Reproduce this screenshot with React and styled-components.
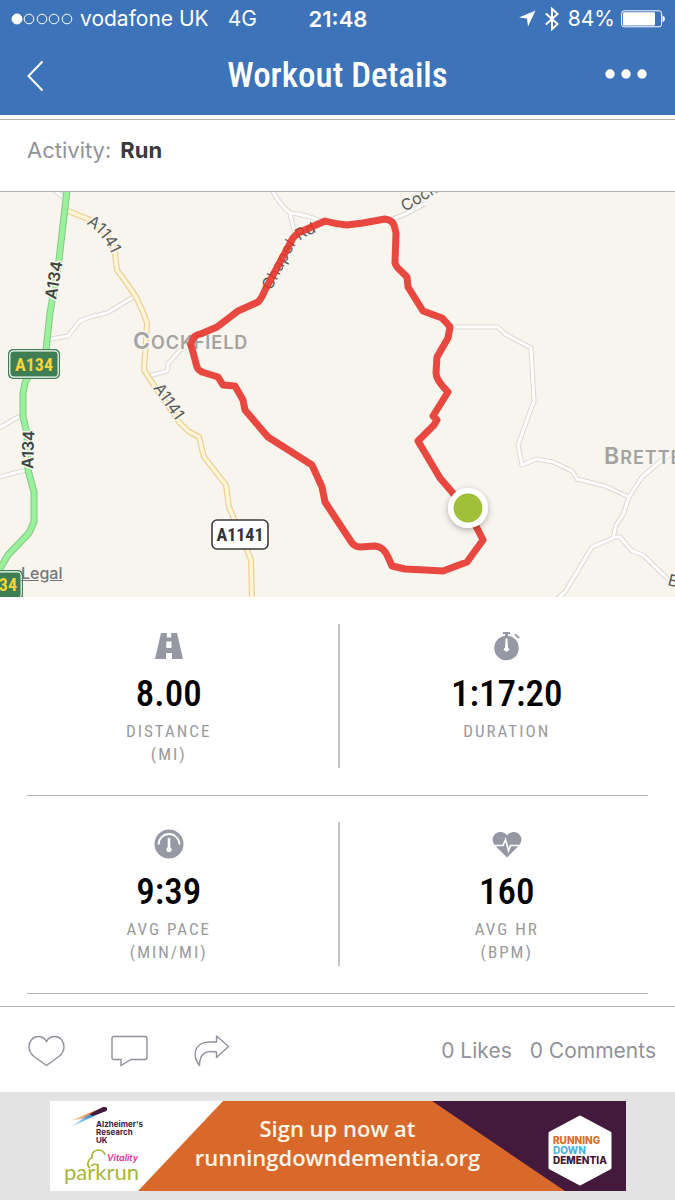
import styled, { createGlobalStyle } from "styled-components";

const sans = `Inter, "Liberation Sans", sans-serif`;
const narrow = `"Roboto Condensed", "Liberation Sans Narrow", "Liberation Sans", sans-serif`;

const GlobalStyle = createGlobalStyle`
  * {
    box-sizing: border-box;
  }
  body {
    margin: 0;
    background: #fff;
    font-family: ${sans};
  }
  svg {
    display: block;
  }
`;

const Page = styled.div`
  display: flex;
  flex-direction: column;
  min-height: 100vh;
`;

const Header = styled.header`
  padding-bottom: 1px;
  background: #3d73b9;
  color: #fff;
`;

const StatusBar = styled.div`
  display: grid;
  grid-template-columns: 1fr auto 1fr;
  align-items: center;
  height: 37px;
  padding: 0 10px 0 11px;
  font-size: 21px;
`;

const StatusGroup = styled.div`
  display: flex;
  align-items: center;
  justify-content: ${({ $end }) => ($end ? "flex-end" : "flex-start")};
  gap: ${({ $gap }) => $gap}px;
`;

const Time = styled.span`
  font-size: 22px;
  font-weight: 600;
`;

const NavBar = styled.nav`
  display: grid;
  grid-template-columns: 98px 1fr 98px;
  align-items: center;
  height: 77px;
`;

const NavButton = styled.button`
  display: flex;
  align-items: center;
  justify-content: ${({ $end }) => ($end ? "flex-end" : "flex-start")};
  height: 64px;
  padding: 0 27px;
  border: 0;
  background: none;
  color: inherit;
  cursor: pointer;
`;

const Title = styled.h1`
  margin: 0;
  font: 500 35px/40px ${narrow};
  text-align: center;
`;

const Activity = styled.div`
  display: flex;
  gap: 9px;
  margin-top: 4px;
  padding: 15px 27px 26px;
  border-top: 1px solid #b4b4b8;
  border-bottom: 1px solid #b4b4b8;
  color: #92929a;
  font-size: 22px;
  line-height: 30px;

  strong {
    color: #3a3a3c;
    font-weight: 700;
  }
`;

const MapArea = styled.section`
  position: relative;

  svg {
    width: 100%;
    height: 405px;
  }
`;

const Legal = styled.a`
  position: absolute;
  left: 21px;
  bottom: 14px;
  color: #77777a;
  font-size: 16px;
  font-weight: 500;
  line-height: 20px;
`;

const Stats = styled.main`
  padding: 1px 0 12px;
`;

const StatRow = styled.div`
  display: grid;
  grid-template-columns: 1fr 1fr;
  margin: 0 27px;
  padding: 26px 0 27px;
  border-bottom: 1px solid #b4b4b8;
`;

const StatCell = styled.div`
  display: flex;
  flex-direction: column;
  align-items: center;
  min-height: 144px;
  padding: ${({ $first }) => ($first ? "0 27px 0 0" : "0 0 0 26px")};

  & + & {
    border-left: 2px solid #c4c4c6;
  }
`;

const StatIcon = styled.div`
  display: flex;
  align-items: center;
  height: 44px;
  color: #9698a4;
`;

const StatValue = styled.div`
  color: #000;
  font: 500 37px/52px ${narrow};
`;

const StatLabel = styled.div`
  color: #9a9a9c;
  font: 400 17px/23px ${narrow};
  letter-spacing: 2px;
  text-align: center;
  white-space: pre-line;
`;

const Social = styled.div`
  display: flex;
  align-items: center;
  justify-content: space-between;
  height: 86px;
  padding: 2px 19px 0 28px;
  border-top: 1px solid #b4b4b8;
`;

const Actions = styled.div`
  display: flex;
  gap: 45px;
`;

const ActionButton = styled.button`
  padding: 0;
  border: 0;
  background: none;
  color: #8f919c;
  cursor: pointer;
`;

const Counts = styled.div`
  display: flex;
  gap: 18px;
  color: #92929a;
  font-size: 21px;
`;

const AdArea = styled.aside`
  flex: 1;
  padding: 9px 16px;
  background: #e3e3e3;
`;

const Banner = styled.a`
  position: relative;
  display: grid;
  grid-template-columns: 110px 1fr 110px;
  align-items: center;
  width: 100%;
  max-width: 576px;
  height: 90px;
  margin: 0 auto;
  overflow: hidden;
  background: #fff;
  text-decoration: none;
`;

const BannerBackdrop = styled.svg`
  position: absolute;
  inset: 0;
  width: 100%;
  height: 100%;
`;

const BannerText = styled.p`
  position: relative;
  margin: 0;
  padding-bottom: 6px;
  color: #fff5ea;
  font: 600 22px/29px "Open Sans", "Noto Sans", sans-serif;
  text-align: center;
  white-space: nowrap;
`;

const BannerLogo = styled.svg`
  position: relative;
`;

const SignalDots = () => (
  <svg width="62" height="12" viewBox="0 0 62 12" fill="none" stroke="#fff">
    <circle cx="6" cy="6" r="5" fill="#fff" />
    {[18, 31, 43, 56].map((x) => (
      <circle key={x} cx={x} cy="6" r="4.8" strokeWidth="1" />
    ))}
  </svg>
);

const LocationArrow = () => (
  <svg width="17" height="17" viewBox="0 0 17 17" fill="#fff">
    <path d="M16.5.5 0 7.500l8 1L9 16.500z" />
  </svg>
);

const Bluetooth = () => (
  <svg width="14" height="24" viewBox="0 0 14 24" fill="none" stroke="#fff" strokeWidth="2">
    <path d="M.8 6.5 12.6 17 7 22.2V1.8L12.6 7 .8 17.5" />
  </svg>
);

const Battery = () => (
  <svg width="44" height="18" viewBox="0 0 44 18">
    <rect x=".6" y=".8" width="40" height="16" rx="2.6" fill="none" stroke="#fff" />
    <rect x="2" y="2.2" width="32" height="13.2" rx="1" fill="#fff" />
    <path d="M41.500 5.5q2.500 1 2.500 3.3T41.500 12.3z" fill="#fff" />
  </svg>
);

const route =
  "M191 155Q192 147 197 145L203 143 217 137 238 121 258 112Q262 108 265 100L293 48 298 43 325 31Q335 34 347 35L363 33 385 29Q392 30 394 35L396 43 395 73Q396 77 401 81L407 87 408 97 423 121 442 128Q446 132 450 137L448 148 437 167 436 183Q436 190 448 202L433 226 437 230 434 235 418 251 440 288 452 302 477 338 483 350 467 372 443 381 425 380 405 379 392 376 388 367Q384 357 375 356L360 357Q355 357 352 353L325 312 322 297 312 275 268 247 245 220 243 210 235 196 223 195 218 187 202 182Q198 180 197 177Z";

const a134 =
  "M67 0 59 70 50 123 46 160 31 180 25 193 23 203V227L27 243 28 280 34 302V332L29 343 8 365-2 382";

const a1141 =
  "M68 21 88 29Q108 40 115 63L117 80 128 95 136 107 143 122 147 133 144 180 155 197 180 233 188 241 199 247 204 267 226 295 229 317 247 360 251 370 252 408";

const lanes = [
  "M51 149 68 146 80 131 90 127 107 123 135 106",
  "M148 186 167 181 168 174 180 160 191 154",
  "M-1 238 18 227 23 227",
  "M-1 287 26 280",
  "M54 0 63 7",
  "M272 0Q280 15 290 23L295 45",
  "M290 23Q305 24 323 32",
  "M383 31Q400 28 413 20L425 14",
  "M452 137H498L505 144 531 158 534 211 518 255 522 275 536 269 553 272 572 281 577 289 605 296 629 307",
  "M676 260 662 270 642 287 629 307 623 325 616 335 613 348 592 357 565 402 557 409",
  "M613 347 620 347 632 361 643 365 676 397",
];

const RouteMap = () => (
  <svg viewBox="0 2 675 405" preserveAspectRatio="xMidYMid slice" role="img" aria-label="Route map">
    <defs>
      <path id="north" d="M86 34Q105 44 115 73" />
      <path id="chapel" d="M271 101 294 57Q299 48 322 40" />
      <filter id="shade" x="-50%" y="-50%" width="200%" height="200%">
        <feDropShadow dx="0" dy="2" stdDeviation="3" floodOpacity=".3" />
      </filter>
    </defs>
    <rect width="675" height="410" fill="#f8f5ee" />
    <g fill="none" strokeLinejoin="round">
      {lanes.map((d) => (
        <path key={d} d={d} stroke="#dbd8d2" strokeWidth="5" />
      ))}
      {lanes.map((d) => (
        <path key={d} d={d} stroke="#fff" strokeWidth="3" />
      ))}
      <path d={a1141} stroke="#edcf91" strokeWidth="6" />
      <path d={a1141} stroke="#fff6d8" strokeWidth="3.6" />
      <path d={a134} stroke="#82c985" strokeWidth="7" />
      <path d={a134} stroke="#9bf09b" strokeWidth="5" />
    </g>
    <g
      fontFamily={sans}
      fontSize="16"
      fill="#5a5a58"
      stroke="#f8f5ee"
      strokeWidth="3"
      strokeLinejoin="round"
      paintOrder="stroke"
    >
      <text>
        <textPath href="#north">A1141</textPath>
      </text>
      <text transform="translate(153 198) rotate(55)">A1141</text>
      <text fontWeight="600" fill="#3e4440" transform="translate(56 110) rotate(-80)">
        A134
      </text>
      <text fontWeight="600" fill="#3e4440" transform="translate(33 279) rotate(-88)">
        A134
      </text>
      <text>
        <textPath href="#chapel">Chapel Rd</textPath>
      </text>
      <text transform="translate(405 22) rotate(-31)">Cock</text>
      <text transform="translate(667 395) rotate(14)">B</text>
      <g fill="#a3a3a1" fontWeight="600" fontSize="18" letterSpacing="1">
        <text x="133" y="159">
          <tspan fontSize="23">C</tspan>OCKFIELD
        </text>
        <text x="604" y="274">
          <tspan fontSize="23">B</tspan>RETTENHAM
        </text>
      </g>
    </g>
    <path
      d={route}
      fill="none"
      stroke="#e5352b"
      strokeOpacity=".9"
      strokeWidth="7"
      strokeLinejoin="round"
    />
    <g fontFamily={narrow} fontSize="18" fontWeight="700" textAnchor="middle">
      <rect x="8" y="159" width="52" height="30" rx="5" fill="#3f7d53" />
      <rect x="9.8" y="160.8" width="48.4" height="26.4" rx="4" fill="none" stroke="#fff" strokeWidth="1.2" />
      <text x="34" y="181" fill="#f8d33c">A134</text>
      <rect x="-29" y="380" width="52" height="30" rx="5" fill="#3f7d53" />
      <rect x="-27" y="381.8" width="48.2" height="26.4" rx="4" fill="none" stroke="#fff" strokeWidth="1.2" />
      <text x="-2" y="401" fill="#f8d33c">A134</text>
      <rect x="212" y="330" width="56" height="29" rx="5" fill="#fff" stroke="#3a3a3a" strokeWidth="1.6" />
      <text x="240" y="351" fill="#333">A1141</text>
    </g>
    <circle cx="468" cy="318" r="20" fill="#fff" filter="url(#shade)" />
    <circle cx="468" cy="318" r="14.400" fill="#a0c03a" />
  </svg>
);

const RoadIcon = () => (
  <svg width="30" height="28" viewBox="0 0 30 28" fill="currentColor">
    <path
      fillRule="evenodd"
      d="M7 1h5.8v4.5h4.4V1H23l6 26H18v-6h-6v6H1zM12.3 9.500v6.500h5.200V9.500z"
    />
  </svg>
);

const StopwatchIcon = () => (
  <svg width="28" height="30" viewBox="0 0 28 30" fill="currentColor">
    <path d="M10 1h7v2h-2v3h-3V3h-2zM21.500 4l1.300-1.300 4 3.800-1.200 1.300z" />
    <circle cx="13.500" cy="17" r="12.300" />
    <path d="M12.500 7.500h2l.5 9q1.700 1 1.200 2.600L13.500 21l-2.700-1.900q-.5-1.600 1.200-2.600z" fill="#fff" />
  </svg>
);

const PaceIcon = () => (
  <svg width="30" height="30" viewBox="0 0 30 30" fill="none" stroke="#fff">
    <circle cx="15" cy="15" r="14.500" fill="#9698a4" stroke="none" />
    <path d="M4.600 15.500A10.400 10.400 0 0 1 25.400 15.500" strokeWidth="2" />
    <path d="M15 9v12" strokeWidth="2.600" />
    <circle cx="15" cy="20.500" r="2.600" fill="#fff" stroke="none" />
  </svg>
);

const HeartRateIcon = () => (
  <svg width="30" height="27" viewBox="0 0 30 27" fill="none">
    <path
      d="M15 26.500 2.500 14Q-.8 9.500 1.500 5 4 .8 8.500 1 13 1.200 15 4.500 17 1.200 21.500 1 26 .8 28.500 5 30.800 9.500 27.500 14z"
      fill="currentColor"
    />
    <path d="M1 14.500h10l2.500-6 3 11 2-5H29" stroke="#fff" strokeWidth="1.700" />
  </svg>
);

const HeartIcon = () => (
  <svg width="38" height="32" viewBox="0 0 38 32" fill="none" stroke="currentColor" strokeWidth="1.400">
    <path d="M18.500 30.500 6 21.500C2.500 18.500 1 15.500 1 12 1 6 5 1.500 10 1.500 14 1.500 17 3.500 18.500 6.500 20 3.500 23 1.500 27 1.500 32 1.500 36 6 36 12 36 15.500 34.500 18.500 31 21.500z" />
  </svg>
);

const CommentIcon = () => (
  <svg width="38" height="32" viewBox="0 0 38 32" fill="none" stroke="currentColor" strokeWidth="1.400">
    <path d="M3 1.500h31Q36 1.500 36 3.500v19q0 2-2 2H20L10 30.500v-6H3Q1 24.500 1 22.500V3.500Q1 1.500 3 1.500z" />
  </svg>
);

const ShareIcon = () => (
  <svg
    width="38"
    height="32"
    viewBox="0 0 38 32"
    fill="none"
    stroke="currentColor"
    strokeWidth="1.400"
    strokeLinejoin="round"
  >
    <path d="M22.500 1 34.500 11.500 22.500 22.500V17C13 15.500 5.500 17 5.500 30.500 2.500 27 1 23 1.200 18 2 10 9 7 15 7h7.500z" />
  </svg>
);

const CharityLogos = () => (
  <BannerLogo width="110" height="90" viewBox="0 0 110 90" aria-hidden="true">
    <defs>
      <linearGradient id="warm">
        <stop offset="0" stopColor="#f6a46a" stopOpacity=".2" />
        <stop offset=".6" stopColor="#e0783a" />
        <stop offset="1" stopColor="#43193c" />
      </linearGradient>
      <linearGradient id="cool">
        <stop offset="0" stopColor="#49b6e8" stopOpacity=".3" />
        <stop offset=".6" stopColor="#3b8fce" />
        <stop offset="1" stopColor="#43193c" />
      </linearGradient>
    </defs>
    <path d="M19 20 53 6.500 56 9 37 17z" fill="url(#warm)" />
    <path d="M21 26 35 16 54 6q4 0 3 3L38 18z" fill="url(#cool)" />
    <path d="M40 13 53 6q5 0 3.500 4L42 15z" fill="#43193c" />
    <g fontFamily={sans} fontSize="8" fontWeight="700" fill="#43193c">
      <text x="46" y="26">Alzheimer's</text>
      <text x="46" y="34">Research</text>
      <text x="46" y="42">UK</text>
    </g>
    <path
      d="M40 67Q37 65 38 62 39 57 42 57 41 50 48 49 54 49 55 54M41 65q3-3 7-1"
      fill="none"
      stroke="#a7b83a"
      strokeWidth="1.600"
    />
    <text x="57" y="60" fontFamily={sans} fontSize="9" fontStyle="italic" fontWeight="600" fill="#e0338d">
      Vitality
    </text>
    <text x="14" y="79" fontFamily="Lato, sans-serif" fontSize="22" fill="#a7b83a">
      parkrun
    </text>
  </BannerLogo>
);

const CampaignLogo = () => (
  <BannerLogo width="110" height="90" viewBox="0 0 110 90" aria-hidden="true">
    <path
      d="M64 16 94 32V67L64 83 34 67V32z"
      fill="#fff"
      stroke="#fff"
      strokeWidth="3"
      strokeLinejoin="round"
    />
    <g fontFamily={sans} fontSize="10" fontWeight="800">
      <text x="37" y="43" fill="#de6b28">RUNNING</text>
      <text x="37" y="53" fill="#4db4e6">DOWN</text>
      <text x="37" y="63" fill="#43193c">DEMENTIA</text>
    </g>
  </BannerLogo>
);

const rows = [
  [
    { icon: <RoadIcon />, value: "8.00", label: "DISTANCE\n(MI)" },
    { icon: <StopwatchIcon />, value: "1:17:20", label: "DURATION" },
  ],
  [
    { icon: <PaceIcon />, value: "9:39", label: "AVG PACE\n(MIN/MI)" },
    { icon: <HeartRateIcon />, value: "160", label: "AVG HR\n(BPM)" },
  ],
];

export default function App() {
  return (
    <Page>
      <GlobalStyle />
      <Header>
        <StatusBar>
          <StatusGroup $gap={19}>
            <StatusGroup $gap={7}>
              <SignalDots />
              <span>vodafone UK</span>
            </StatusGroup>
            <span>4G</span>
          </StatusGroup>
          <Time>21:48</Time>
          <StatusGroup $end $gap={9}>
            <LocationArrow />
            <Bluetooth />
            <StatusGroup $gap={6}>
              <span>84%</span>
              <Battery />
            </StatusGroup>
          </StatusGroup>
        </StatusBar>
        <NavBar>
          <NavButton aria-label="Back">
            <svg width="18" height="32" viewBox="0 0 18 32" fill="none" stroke="#fff" strokeWidth="2">
              <path d="M15.500 1.500 1.500 16l14 14.500" />
            </svg>
          </NavButton>
          <Title>Workout Details</Title>
          <NavButton $end aria-label="More options">
            <svg width="43" height="14" viewBox="0 0 43 14" fill="#fff">
              <circle cx="5" cy="5" r="4.700" />
              <circle cx="21" cy="5" r="4.700" />
              <circle cx="37" cy="5" r="4.700" />
            </svg>
          </NavButton>
        </NavBar>
      </Header>
      <Activity>
        <span>Activity:</span>
        <strong>Run</strong>
      </Activity>
      <MapArea>
        <RouteMap />
        <Legal href="#legal">Legal</Legal>
      </MapArea>
      <Stats>
        {rows.map((row) => (
          <StatRow key={row[0].label}>
            {row.map((stat, i) => (
              <StatCell key={stat.label} $first={i === 0}>
                <StatIcon>{stat.icon}</StatIcon>
                <StatValue>{stat.value}</StatValue>
                <StatLabel>{stat.label}</StatLabel>
              </StatCell>
            ))}
          </StatRow>
        ))}
      </Stats>
      <Social>
        <Actions>
          <ActionButton aria-label="Like">
            <HeartIcon />
          </ActionButton>
          <ActionButton aria-label="Comment">
            <CommentIcon />
          </ActionButton>
          <ActionButton aria-label="Share">
            <ShareIcon />
          </ActionButton>
        </Actions>
        <Counts>
          <span>0 Likes</span>
          <span>0 Comments</span>
        </Counts>
      </Social>
      <AdArea>
        <Banner href="#signup">
          <BannerBackdrop viewBox="0 0 576 90" preserveAspectRatio="none" aria-hidden="true">
            <path d="M88 90 173 0H576V90z" fill="#d9692b" />
            <path d="M382 0 515 90H576V0z" fill="#43193c" />
          </BannerBackdrop>
          <CharityLogos />
          <BannerText>
            Sign up now at
            <br />
            runningdowndementia.org
          </BannerText>
          <CampaignLogo />
        </Banner>
      </AdArea>
    </Page>
  );
}
